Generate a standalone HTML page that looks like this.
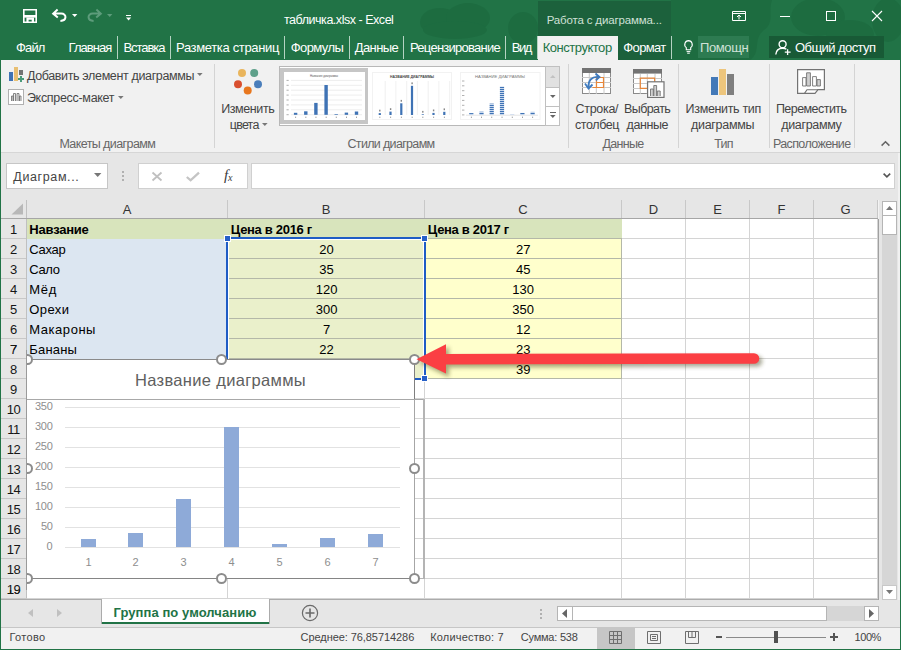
<!DOCTYPE html>
<html lang="ru">
<head>
<meta charset="utf-8">
<title>табличка.xlsx - Excel</title>
<style>
html,body{margin:0;padding:0;}
body{width:901px;height:650px;overflow:hidden;position:relative;background:#f3f3f3;font-family:"Liberation Sans",sans-serif;font-size:12px;color:#444;}
div,span{box-sizing:border-box;}
.a{position:absolute;}
.t{position:absolute;white-space:nowrap;line-height:16px;height:16px;}
.sep{position:absolute;top:36px;width:1px;height:23px;background:#b5d3c2;}
.vsep{position:absolute;top:64px;width:1px;height:84px;background:#d4d4d4;}
.hd{position:absolute;width:11px;height:11px;border-radius:50%;border:2px solid #8c8c8c;background:#fff;}
.bh{position:absolute;width:7px;height:7px;background:#2660c8;border:1px solid #fff;}
svg{position:absolute;overflow:visible;}
</style>
</head>
<body>

<!-- title bar -->
<div class="a" style="left:0px;top:0px;width:901px;height:60px;background:#217346;"></div>
<svg style="left:0;top:0" width="901" height="60" viewBox="0 0 901 60"><g fill="#1c6a3f" opacity="0.75"><ellipse cx="440" cy="22" rx="20" ry="14"/><ellipse cx="468" cy="18" rx="22" ry="15"/><ellipse cx="455" cy="30" rx="32" ry="9"/><ellipse cx="523" cy="28" rx="15" ry="16"/><path d="M671 0H772C768 12 775 22 764 30C752 40 762 52 750 60H671Z"/><ellipse cx="818" cy="17" rx="27" ry="19"/><ellipse cx="850" cy="34" rx="24" ry="14"/><ellipse cx="888" cy="20" rx="16" ry="22"/></g></svg>
<div class="a" style="left:538px;top:1px;width:133px;height:59px;background:#1c613c;"></div>
<div class="a" style="left:538px;top:36px;width:80px;height:24px;background:#f1f1f1;"></div>
<div class="a" style="left:698px;top:36px;width:51px;height:22px;background:#2d7b51;"></div>
<div class="a" style="left:769px;top:36px;width:115px;height:22px;background:#185a36;"></div>
<div class="t" style="left:284.0px;top:12px;font-size:12.5px;color:#fff;letter-spacing:-0.47px;">табличка.xlsx - Excel</div>
<div class="t" style="left:546.7px;top:12px;font-size:11.5px;color:#cfe0d6;letter-spacing:-0.16px;">Работа с диаграмма...</div>
<div class="t" style="left:16.0px;top:40px;font-size:13px;color:#fff;letter-spacing:-0.84px;">Файл</div>
<div class="t" style="left:68.6px;top:40px;font-size:13px;color:#fff;letter-spacing:-0.97px;">Главная</div>
<div class="t" style="left:123.5px;top:40px;font-size:13px;color:#fff;letter-spacing:-1.05px;">Вставка</div>
<div class="t" style="left:176.0px;top:40px;font-size:13px;color:#fff;letter-spacing:-0.35px;">Разметка страниц</div>
<div class="t" style="left:290.7px;top:40px;font-size:13px;color:#fff;letter-spacing:-0.57px;">Формулы</div>
<div class="t" style="left:354.7px;top:40px;font-size:13px;color:#fff;letter-spacing:-0.56px;">Данные</div>
<div class="t" style="left:410.0px;top:40px;font-size:13px;color:#fff;letter-spacing:-0.74px;">Рецензирование</div>
<div class="t" style="left:511.7px;top:40px;font-size:13px;color:#fff;letter-spacing:-1.41px;">Вид</div>
<div class="t" style="left:623.3px;top:40px;font-size:13px;color:#fff;letter-spacing:-0.63px;">Формат</div>
<div class="t" style="left:542.7px;top:40px;font-size:13px;color:#217346;letter-spacing:-0.47px;">Конструктор</div>
<div class="t" style="left:700.0px;top:40px;font-size:13px;color:#cfe2d7;letter-spacing:-0.39px;">Помощн</div>
<div class="t" style="left:795.0px;top:40px;font-size:13px;color:#fff;letter-spacing:-0.57px;">Общий доступ</div>
<div class="sep" style="left:117px"></div>
<div class="sep" style="left:170px"></div>
<div class="sep" style="left:284px"></div>
<div class="sep" style="left:349px"></div>
<div class="sep" style="left:403px"></div>
<div class="sep" style="left:505px"></div>
<div class="sep" style="left:537px"></div>
<div class="sep" style="left:671px"></div>
<svg style="left:23px;top:9px" width="14" height="14" viewBox="0 0 14 14"><path d="M0.8 0.8H13.2V13.2H0.8Z" fill="none" stroke="#fff" stroke-width="1.6"/><path d="M0 6H14V8.6H0Z" fill="#fff"/><path d="M3.4 8.6H11V14H8.7V10.8H5.6V14H3.4Z" fill="#fff"/></svg>
<svg style="left:52px;top:9px" width="15" height="13" viewBox="0 0 15 13"><path d="M5.6 0.6L1.2 4.6L5.8 8.4 M1.6 4.6H9.2C15 4.6 15 11.6 8.4 11.9" fill="none" stroke="#fff" stroke-width="2"/></svg>
<svg style="left:72px;top:14px" width="6" height="3" viewBox="0 0 6 3"><path d="M0 0H5.4L2.7 3Z" fill="#fff"/></svg>
<svg style="left:87px;top:9px" width="15" height="13" viewBox="0 0 15 13"><path d="M9.4 0.6L13.8 4.6L9.2 8.4 M13.4 4.6H5.8C0 4.6 0 11.6 6.6 11.9" fill="none" stroke="#5d9c7b" stroke-width="2"/></svg>
<svg style="left:107px;top:14px" width="6" height="3" viewBox="0 0 6 3"><path d="M0 0H5.4L2.7 3Z" fill="#5d9c7b"/></svg>
<div class="a" style="left:126px;top:15px;width:5px;height:1px;background:#fff;"></div>
<svg style="left:126px;top:17px" width="6" height="4" viewBox="0 0 6 4"><path d="M0 0.4H5.2L2.6 3.6Z" fill="#fff"/></svg>
<svg style="left:732px;top:11px" width="14" height="10" viewBox="0 0 14 10"><path d="M0.5 0.5H13.5V9.5H0.5Z M0.5 2.5H13.5" fill="none" stroke="#fff" stroke-width="1"/><path d="M7 8.5V4.2 M5 6L7 4L9 6" fill="none" stroke="#fff" stroke-width="1"/></svg>
<div class="a" style="left:780px;top:16px;width:10px;height:1px;background:#fff;"></div>
<div class="a" style="left:826px;top:11px;width:10px;height:10px;background:transparent;border:1px solid #fff;"></div>
<svg style="left:872px;top:11px" width="10" height="10" viewBox="0 0 10 10"><path d="M0 0L10 10M10 0L0 10" stroke="#fff" stroke-width="1.1"/></svg>
<svg style="left:684px;top:40px" width="9" height="14" viewBox="0 0 9 14"><path d="M4.5 0.6A3.9 3.9 0 0 0 2.3 7.6V9.8H6.7V7.6A3.9 3.9 0 0 0 4.5 0.6Z" fill="none" stroke="#fff" stroke-width="1.1"/><path d="M2.6 11.6H6.4 M3.2 13.2H5.8" stroke="#fff" stroke-width="1"/></svg>
<svg style="left:775px;top:40px" width="17" height="15" viewBox="0 0 17 15"><circle cx="7.6" cy="4.2" r="3.5" fill="none" stroke="#fff" stroke-width="1.4"/><path d="M0.8 14.5C1.2 9.8 4 8.2 7.6 8.2C9.4 8.2 10.6 8.6 11.4 9.2" fill="none" stroke="#fff" stroke-width="1.4"/><path d="M12.6 9.2V15 M9.8 12.1H15.6" stroke="#fff" stroke-width="1.3"/></svg>
<!-- ribbon -->
<div class="a" style="left:1px;top:60px;width:899px;height:92px;background:#f1f1f1;"></div>
<div class="a" style="left:0px;top:60px;width:1px;height:590px;background:#217346;"></div>
<div class="a" style="left:900px;top:60px;width:1px;height:590px;background:#217346;"></div>
<div class="a" style="left:0px;top:649px;width:901px;height:1px;background:#217346;"></div>
<div class="a" style="left:1px;top:152px;width:899px;height:1px;background:#d6d6d6;"></div>
<div class="t" style="left:26.9px;top:68px;font-size:12.5px;color:#444;letter-spacing:-0.36px;">Добавить элемент диаграммы</div>
<div class="t" style="left:26.9px;top:90px;font-size:12.5px;color:#444;letter-spacing:-0.30px;">Экспресс-макет</div>
<div class="t" style="left:59.4px;top:136px;font-size:12.5px;color:#666;letter-spacing:-0.59px;">Макеты диаграмм</div>
<div class="t" style="left:221.2px;top:101px;font-size:12.5px;color:#444;letter-spacing:-0.40px;">Изменить</div>
<div class="t" style="left:229.8px;top:117px;font-size:12.5px;color:#444;letter-spacing:-0.79px;">цвета</div>
<div class="t" style="left:347.5px;top:136px;font-size:12.5px;color:#666;letter-spacing:-0.67px;">Стили диаграмм</div>
<div class="t" style="left:575.5px;top:101px;font-size:12.5px;color:#444;letter-spacing:-0.30px;">Строка/</div>
<div class="t" style="left:575.0px;top:117px;font-size:12.5px;color:#444;letter-spacing:-0.42px;">столбец</div>
<div class="t" style="left:624.0px;top:101px;font-size:12.5px;color:#444;letter-spacing:-0.58px;">Выбрать</div>
<div class="t" style="left:626.5px;top:117px;font-size:12.5px;color:#444;letter-spacing:-0.41px;">данные</div>
<div class="t" style="left:602.5px;top:136px;font-size:12.5px;color:#666;letter-spacing:-0.69px;">Данные</div>
<div class="t" style="left:685.6px;top:101px;font-size:12.5px;color:#444;letter-spacing:-0.34px;">Изменить тип</div>
<div class="t" style="left:691.0px;top:117px;font-size:12.5px;color:#444;letter-spacing:-0.30px;">диаграммы</div>
<div class="t" style="left:714.2px;top:136px;font-size:12.5px;color:#666;letter-spacing:-0.71px;">Тип</div>
<div class="t" style="left:775.9px;top:101px;font-size:12.5px;color:#444;letter-spacing:-0.54px;">Переместить</div>
<div class="t" style="left:781.3px;top:117px;font-size:12.5px;color:#444;letter-spacing:-0.35px;">диаграмму</div>
<div class="t" style="left:772.9px;top:136px;font-size:12.5px;color:#666;letter-spacing:-0.61px;">Расположение</div>
<div class="vsep" style="left:214px"></div>
<div class="vsep" style="left:568px"></div>
<div class="vsep" style="left:678px"></div>
<div class="vsep" style="left:769px"></div>
<div class="vsep" style="left:854px"></div>
<div class="a" style="left:279px;top:66px;width:267px;height:60px;background:#fff;border:1px solid #b8b8b8;"></div>
<div class="a" style="left:9px;top:72px;width:4px;height:9px;background:#3f73b5;"></div>
<div class="a" style="left:14px;top:67px;width:4px;height:14px;background:#e8bf72;"></div>
<div class="a" style="left:19px;top:70px;width:4px;height:5px;background:#737373;"></div>
<div class="a" style="left:20px;top:76px;width:2px;height:6px;background:#4a9a7a;"></div>
<div class="a" style="left:18px;top:78px;width:6px;height:2px;background:#4a9a7a;"></div>
<svg style="left:197px;top:73px" width="6" height="3" viewBox="0 0 6 3"><path d="M0 0H5.6L2.8 3Z" fill="#777"/></svg>
<div class="a" style="left:8px;top:89px;width:16px;height:16px;background:#fff;border:1px solid #b0b0b0;"></div>
<svg style="left:8px;top:89px" width="16" height="16" viewBox="0 0 16 16"><path d="M3.5 12V7H5V12 M5.5 12V4.5H7.5V12 M9 12V4.5H11V12 M11.5 12V7H13V12" fill="#ececec" stroke="#6a6a6a" stroke-width="0.8"/></svg>
<svg style="left:118px;top:96px" width="6" height="3" viewBox="0 0 6 3"><path d="M0 0H5.6L2.8 3Z" fill="#777"/></svg>
<svg style="left:232px;top:66px" width="32" height="30" viewBox="0 0 32 30"><circle cx="10" cy="7" r="4" fill="#e9b55d"/><circle cx="22.2" cy="7" r="4" fill="#5fa08a"/><circle cx="6" cy="18.2" r="4" fill="#d9502f"/><circle cx="26" cy="18.2" r="4" fill="#4a7ebb"/><circle cx="15.7" cy="24.5" r="4" fill="#e8771e"/></svg>
<svg style="left:262px;top:123px" width="6" height="3" viewBox="0 0 6 3"><path d="M0 0H5.6L2.8 3Z" fill="#777"/></svg>
<svg style="left:582px;top:68px" width="29" height="26" viewBox="0 0 29 26"><rect x="0.5" y="0.5" width="28" height="25" fill="#fff" stroke="#8a8a8a"/><rect x="0" y="0" width="29" height="5" fill="#737373"/><path d="M7.3 5V26 M14.3 5V26 M22 5V26 M0 9.5H29 M0 14.5H29 M0 19.5H29" stroke="#c8c8c8" stroke-width="1" fill="none"/><path d="M10.5 19.5H21.5V9.5H14.5V19.5 M14.5 14.5H21.5" fill="none" stroke="#e8873a" stroke-width="1.2"/><path d="M6.5 19.5C6 12 10 8.5 16.5 9" fill="none" stroke="#3f7bbf" stroke-width="1.8"/><path d="M13.5 5.5L17.5 9L13.8 12.3 M3 15.5L6.5 20.5L10.5 16.5" fill="none" stroke="#3f7bbf" stroke-width="1.8"/></svg>
<svg style="left:633px;top:69px" width="32" height="29" viewBox="0 0 32 29"><rect x="0.5" y="0.5" width="28" height="24" fill="#fff" stroke="#8a8a8a"/><rect x="0" y="0" width="29" height="4.6" fill="#737373"/><path d="M7.3 5V25 M14.3 5V25 M22 5V25 M0 9.5H29 M0 14.5H29 M0 19.5H29" stroke="#c8c8c8" stroke-width="1" fill="none"/><path d="M7.3 9.2H21.6V19.4H7.3Z" fill="none" stroke="#e8873a" stroke-width="1.2"/><rect x="14.6" y="12.8" width="16.4" height="15.6" fill="#fff" stroke="#737373" stroke-width="1.2"/><path d="M17.5 27V20H20.3V27 M20.8 27V16.5H23.6V27 M24.3 27V22H27.2V27" fill="#d0d0d0" stroke="#737373" stroke-width="0.9"/></svg>
<div class="a" style="left:711px;top:77px;width:7px;height:18px;background:#4379b8;"></div>
<div class="a" style="left:719px;top:69px;width:7px;height:26px;background:#edc57c;"></div>
<div class="a" style="left:727px;top:74px;width:7px;height:21px;background:#7f7f7f;"></div>
<svg style="left:797px;top:69px" width="28" height="25" viewBox="0 0 28 25"><path d="M0.6 0.6H27.4V20.7H21L18 24.4H0.6Z" fill="#fff" stroke="#737373" stroke-width="1.2"/><path d="M7.5 24.4L10 20.7H21" fill="none" stroke="#737373" stroke-width="1.1"/><path d="M5.6 17V8.6H9V17Z M15.6 17V7.6H19.4V17Z" fill="#fff" stroke="#737373" stroke-width="0.9"/><path d="M9.6 17V3.8H13.4V17Z M20 17V10.6H23.4V17Z" fill="#d0d0d0" stroke="#737373" stroke-width="0.9"/></svg>
<svg style="left:881px;top:141px" width="9" height="5" viewBox="0 0 9 5"><path d="M0.6 4.6L4.5 0.8L8.4 4.6" fill="none" stroke="#666" stroke-width="1.5"/></svg>
<div class="a" style="left:280px;top:68px;width:88px;height:56px;background:#c6c6c6;"></div>
<div class="a" style="left:284px;top:72px;width:81px;height:48px;background:#fff;"></div>
<svg style="left:0;top:0" width="901" height="130" viewBox="0 0 901 130"><defs><pattern id="stp" width="4" height="2" patternUnits="userSpaceOnUse" y="115"><rect width="4" height="1.3" fill="#3f73b5"/><rect y="1.3" width="4" height="0.7" fill="#c8d8ee"/></pattern></defs><path d="M291 80.4H362" stroke="#e0e0e0" stroke-width="0.6"/><rect x="286.5" y="79.9" width="2.2" height="1" fill="#b0b0b0"/><path d="M291 85.3H362" stroke="#e0e0e0" stroke-width="0.6"/><rect x="286.5" y="84.8" width="2.2" height="1" fill="#b0b0b0"/><path d="M291 90.2H362" stroke="#e0e0e0" stroke-width="0.6"/><rect x="286.5" y="89.7" width="2.2" height="1" fill="#b0b0b0"/><path d="M291 95.1H362" stroke="#e0e0e0" stroke-width="0.6"/><rect x="286.5" y="94.6" width="2.2" height="1" fill="#b0b0b0"/><path d="M291 100.0H362" stroke="#e0e0e0" stroke-width="0.6"/><rect x="286.5" y="99.5" width="2.2" height="1" fill="#b0b0b0"/><path d="M291 104.9H362" stroke="#e0e0e0" stroke-width="0.6"/><rect x="286.5" y="104.4" width="2.2" height="1" fill="#b0b0b0"/><path d="M291 109.8H362" stroke="#e0e0e0" stroke-width="0.6"/><rect x="286.5" y="109.3" width="2.2" height="1" fill="#b0b0b0"/><path d="M291 114.7H362" stroke="#e0e0e0" stroke-width="0.6"/><rect x="286.5" y="114.2" width="2.2" height="1" fill="#b0b0b0"/><rect x="293.9" y="112.8" width="3.4" height="2.0" fill="#3f73b5"/><rect x="295.2" y="116.6" width="0.9" height="1.4" fill="#999"/><rect x="304.1" y="111.3" width="3.4" height="3.5" fill="#3f73b5"/><rect x="305.4" y="116.6" width="0.9" height="1.4" fill="#999"/><rect x="314.2" y="102.9" width="3.4" height="11.9" fill="#3f73b5"/><rect x="315.5" y="116.6" width="0.9" height="1.4" fill="#999"/><rect x="324.4" y="85.0" width="3.4" height="29.8" fill="#3f73b5"/><rect x="325.7" y="116.6" width="0.9" height="1.4" fill="#999"/><rect x="334.5" y="114.1" width="3.4" height="0.7" fill="#3f73b5"/><rect x="335.8" y="116.6" width="0.9" height="1.4" fill="#999"/><rect x="344.7" y="112.6" width="3.4" height="2.2" fill="#3f73b5"/><rect x="346.0" y="116.6" width="0.9" height="1.4" fill="#999"/><rect x="354.8" y="111.5" width="3.4" height="3.3" fill="#3f73b5"/><rect x="356.1" y="116.6" width="0.9" height="1.4" fill="#999"/><text x="310" y="77.4" font-size="3.2" fill="#555" textLength="28" lengthAdjust="spacingAndGlyphs">Название диаграммы</text><rect x="372.5" y="72.5" width="79" height="47" fill="#fff" stroke="#f2f2f2"/><text x="390" y="77.6" font-size="4.2" font-weight="bold" fill="#444" textLength="44" lengthAdjust="spacingAndGlyphs">НАЗВАНИЕ ДИАГРАММЫ</text><path d="M385.2 81V115" stroke="#e6e6e6" stroke-width="0.6"/><rect x="378.7" y="113.1" width="2.2" height="1.9" fill="#3f73b5"/><rect x="379.1" y="109.7" width="1.4" height="1.8" fill="#888"/><rect x="379.4" y="116.6" width="0.9" height="1.4" fill="#999"/><path d="M395.9 81V115" stroke="#e6e6e6" stroke-width="0.6"/><rect x="389.4" y="111.6" width="2.2" height="3.4" fill="#3f73b5"/><rect x="389.9" y="108.2" width="1.4" height="1.8" fill="#888"/><rect x="390.2" y="116.6" width="0.9" height="1.4" fill="#999"/><path d="M406.7 81V115" stroke="#e6e6e6" stroke-width="0.6"/><rect x="400.2" y="103.3" width="2.2" height="11.7" fill="#3f73b5"/><rect x="400.6" y="99.9" width="1.4" height="1.8" fill="#888"/><rect x="400.9" y="116.6" width="0.9" height="1.4" fill="#999"/><path d="M417.4 81V115" stroke="#e6e6e6" stroke-width="0.6"/><rect x="410.9" y="85.8" width="2.2" height="29.2" fill="#3f73b5"/><rect x="411.4" y="82.4" width="1.4" height="1.8" fill="#888"/><rect x="411.7" y="116.6" width="0.9" height="1.4" fill="#999"/><path d="M428.2 81V115" stroke="#e6e6e6" stroke-width="0.6"/><rect x="421.7" y="114.3" width="2.2" height="0.7" fill="#3f73b5"/><rect x="422.1" y="110.9" width="1.4" height="1.8" fill="#888"/><rect x="422.4" y="116.6" width="0.9" height="1.4" fill="#999"/><path d="M438.9 81V115" stroke="#e6e6e6" stroke-width="0.6"/><rect x="432.4" y="112.9" width="2.2" height="2.1" fill="#3f73b5"/><rect x="432.9" y="109.5" width="1.4" height="1.8" fill="#888"/><rect x="433.2" y="116.6" width="0.9" height="1.4" fill="#999"/><path d="M449.7 81V115" stroke="#e6e6e6" stroke-width="0.6"/><rect x="443.2" y="111.8" width="2.2" height="3.2" fill="#3f73b5"/><rect x="443.6" y="108.4" width="1.4" height="1.8" fill="#888"/><rect x="443.9" y="116.6" width="0.9" height="1.4" fill="#999"/><rect x="460.5" y="72.5" width="79.5" height="47" fill="#fff" stroke="#f2f2f2"/><text x="475" y="78" font-size="4.2" fill="#777" textLength="50" lengthAdjust="spacingAndGlyphs">НАЗВАНИЕ ДИАГРАММЫ</text><rect x="462" y="80.5" width="2.4" height="1" fill="#b0b0b0"/><rect x="462" y="85.3" width="2.4" height="1" fill="#b0b0b0"/><rect x="462" y="90.2" width="2.4" height="1" fill="#b0b0b0"/><rect x="462" y="95.0" width="2.4" height="1" fill="#b0b0b0"/><rect x="462" y="99.9" width="2.4" height="1" fill="#b0b0b0"/><rect x="462" y="104.8" width="2.4" height="1" fill="#b0b0b0"/><rect x="462" y="109.6" width="2.4" height="1" fill="#b0b0b0"/><rect x="462" y="114.4" width="2.4" height="1" fill="#b0b0b0"/><path d="M466 115.2H538" stroke="#d8d8d8" stroke-width="0.7"/><rect x="469.2" y="113.1" width="4.2" height="1.9" fill="url(#stp)"/><rect x="470.9" y="116.6" width="0.9" height="1.4" fill="#999"/><rect x="479.4" y="111.7" width="4.2" height="3.3" fill="url(#stp)"/><rect x="481.1" y="116.6" width="0.9" height="1.4" fill="#999"/><rect x="489.6" y="103.6" width="4.2" height="11.4" fill="url(#stp)"/><rect x="491.3" y="116.6" width="0.9" height="1.4" fill="#999"/><rect x="499.9" y="86.5" width="4.2" height="28.5" fill="url(#stp)"/><rect x="501.6" y="116.6" width="0.9" height="1.4" fill="#999"/><rect x="510.1" y="114.3" width="4.2" height="0.7" fill="url(#stp)"/><rect x="511.8" y="116.6" width="0.9" height="1.4" fill="#999"/><rect x="520.3" y="112.9" width="4.2" height="2.1" fill="url(#stp)"/><rect x="522.0" y="116.6" width="0.9" height="1.4" fill="#999"/><rect x="530.5" y="111.9" width="4.2" height="3.1" fill="url(#stp)"/><rect x="532.2" y="116.6" width="0.9" height="1.4" fill="#999"/></svg>
<div class="a" style="left:545px;top:66px;width:15px;height:60px;background:#fff;border:1px solid #c0c0c0;"></div>
<div class="a" style="left:545px;top:66px;width:15px;height:22px;background:#e1e1e1;border:1px solid #c0c0c0;"></div>
<div class="a" style="left:545px;top:106px;width:15px;height:1px;background:#c0c0c0;"></div>
<svg style="left:550px;top:75px" width="6" height="3" viewBox="0 0 6 3"><path d="M0 3H5.6L2.8 0Z" fill="#c2c2c2"/></svg>
<svg style="left:550px;top:95px" width="6" height="3" viewBox="0 0 6 3"><path d="M0 0H5.6L2.8 3Z" fill="#666"/></svg>
<div class="a" style="left:550px;top:112px;width:6px;height:1px;background:#666;"></div>
<svg style="left:550px;top:115px" width="6" height="3" viewBox="0 0 6 3"><path d="M0 0H5.6L2.8 3Z" fill="#666"/></svg>
<!-- formula bar -->
<div class="a" style="left:1px;top:153px;width:899px;height:47px;background:#e6e6e6;"></div>
<div class="a" style="left:6px;top:163px;width:102px;height:26px;background:#fff;border:1px solid #c6c6c6;"></div>
<div class="t" style="left:13.3px;top:169px;font-size:12.5px;color:#444;letter-spacing:0.62px;">Диаграм...</div>
<div class="a" style="left:138px;top:163px;width:110px;height:26px;background:#fff;border:1px solid #d0d0d0;"></div>
<div class="a" style="left:251px;top:163px;width:644px;height:26px;background:#fff;border:1px solid #d0d0d0;"></div>
<!-- grid -->
<div class="a" style="left:1px;top:200px;width:877px;height:19px;background:#e6e6e6;"></div>
<div class="a" style="left:1px;top:219px;width:26px;height:380px;background:#e6e6e6;"></div>
<div class="a" style="left:27px;top:219px;width:851px;height:380px;background:#fff;"></div>
<div class="a" style="left:27px;top:238px;width:851px;height:1px;background:#d4d4d4;"></div>
<div class="a" style="left:1px;top:238px;width:26px;height:1px;background:#c8c8c8;"></div>
<div class="a" style="left:27px;top:258px;width:851px;height:1px;background:#d4d4d4;"></div>
<div class="a" style="left:1px;top:258px;width:26px;height:1px;background:#c8c8c8;"></div>
<div class="a" style="left:27px;top:278px;width:851px;height:1px;background:#d4d4d4;"></div>
<div class="a" style="left:1px;top:278px;width:26px;height:1px;background:#c8c8c8;"></div>
<div class="a" style="left:27px;top:298px;width:851px;height:1px;background:#d4d4d4;"></div>
<div class="a" style="left:1px;top:298px;width:26px;height:1px;background:#c8c8c8;"></div>
<div class="a" style="left:27px;top:318px;width:851px;height:1px;background:#d4d4d4;"></div>
<div class="a" style="left:1px;top:318px;width:26px;height:1px;background:#c8c8c8;"></div>
<div class="a" style="left:27px;top:338px;width:851px;height:1px;background:#d4d4d4;"></div>
<div class="a" style="left:1px;top:338px;width:26px;height:1px;background:#c8c8c8;"></div>
<div class="a" style="left:27px;top:358px;width:851px;height:1px;background:#d4d4d4;"></div>
<div class="a" style="left:1px;top:358px;width:26px;height:1px;background:#c8c8c8;"></div>
<div class="a" style="left:27px;top:378px;width:851px;height:1px;background:#d4d4d4;"></div>
<div class="a" style="left:1px;top:378px;width:26px;height:1px;background:#c8c8c8;"></div>
<div class="a" style="left:27px;top:398px;width:851px;height:1px;background:#d4d4d4;"></div>
<div class="a" style="left:1px;top:398px;width:26px;height:1px;background:#c8c8c8;"></div>
<div class="a" style="left:27px;top:418px;width:851px;height:1px;background:#d4d4d4;"></div>
<div class="a" style="left:1px;top:418px;width:26px;height:1px;background:#c8c8c8;"></div>
<div class="a" style="left:27px;top:438px;width:851px;height:1px;background:#d4d4d4;"></div>
<div class="a" style="left:1px;top:438px;width:26px;height:1px;background:#c8c8c8;"></div>
<div class="a" style="left:27px;top:458px;width:851px;height:1px;background:#d4d4d4;"></div>
<div class="a" style="left:1px;top:458px;width:26px;height:1px;background:#c8c8c8;"></div>
<div class="a" style="left:27px;top:478px;width:851px;height:1px;background:#d4d4d4;"></div>
<div class="a" style="left:1px;top:478px;width:26px;height:1px;background:#c8c8c8;"></div>
<div class="a" style="left:27px;top:498px;width:851px;height:1px;background:#d4d4d4;"></div>
<div class="a" style="left:1px;top:498px;width:26px;height:1px;background:#c8c8c8;"></div>
<div class="a" style="left:27px;top:518px;width:851px;height:1px;background:#d4d4d4;"></div>
<div class="a" style="left:1px;top:518px;width:26px;height:1px;background:#c8c8c8;"></div>
<div class="a" style="left:27px;top:538px;width:851px;height:1px;background:#d4d4d4;"></div>
<div class="a" style="left:1px;top:538px;width:26px;height:1px;background:#c8c8c8;"></div>
<div class="a" style="left:27px;top:558px;width:851px;height:1px;background:#d4d4d4;"></div>
<div class="a" style="left:1px;top:558px;width:26px;height:1px;background:#c8c8c8;"></div>
<div class="a" style="left:27px;top:578px;width:851px;height:1px;background:#d4d4d4;"></div>
<div class="a" style="left:1px;top:578px;width:26px;height:1px;background:#c8c8c8;"></div>
<div class="a" style="left:27px;top:598px;width:851px;height:1px;background:#d4d4d4;"></div>
<div class="a" style="left:1px;top:598px;width:26px;height:1px;background:#c8c8c8;"></div>
<div class="a" style="left:227px;top:219px;width:1px;height:380px;background:#d4d4d4;"></div>
<div class="a" style="left:227px;top:200px;width:1px;height:19px;background:#c8c8c8;"></div>
<div class="a" style="left:424px;top:219px;width:1px;height:380px;background:#d4d4d4;"></div>
<div class="a" style="left:424px;top:200px;width:1px;height:19px;background:#c8c8c8;"></div>
<div class="a" style="left:621px;top:219px;width:1px;height:380px;background:#d4d4d4;"></div>
<div class="a" style="left:621px;top:200px;width:1px;height:19px;background:#c8c8c8;"></div>
<div class="a" style="left:685px;top:219px;width:1px;height:380px;background:#d4d4d4;"></div>
<div class="a" style="left:685px;top:200px;width:1px;height:19px;background:#c8c8c8;"></div>
<div class="a" style="left:749px;top:219px;width:1px;height:380px;background:#d4d4d4;"></div>
<div class="a" style="left:749px;top:200px;width:1px;height:19px;background:#c8c8c8;"></div>
<div class="a" style="left:813px;top:219px;width:1px;height:380px;background:#d4d4d4;"></div>
<div class="a" style="left:813px;top:200px;width:1px;height:19px;background:#c8c8c8;"></div>
<div class="a" style="left:877px;top:219px;width:1px;height:380px;background:#d4d4d4;"></div>
<div class="a" style="left:877px;top:200px;width:1px;height:19px;background:#c8c8c8;"></div>
<div class="a" style="left:27px;top:219px;width:595px;height:20px;background:#d8e4bc;"></div>
<div class="a" style="left:27px;top:239px;width:200px;height:120px;background:#dce6f1;"></div>
<div class="a" style="left:228px;top:239px;width:196px;height:139px;background:#eaf0cb;"></div>
<div class="a" style="left:425px;top:239px;width:196px;height:139px;background:#ffffcc;"></div>
<div class="a" style="left:228px;top:258px;width:393px;height:1px;background:#b4b8a8;"></div>
<div class="a" style="left:228px;top:278px;width:393px;height:1px;background:#b4b8a8;"></div>
<div class="a" style="left:228px;top:298px;width:393px;height:1px;background:#b4b8a8;"></div>
<div class="a" style="left:228px;top:318px;width:393px;height:1px;background:#b4b8a8;"></div>
<div class="a" style="left:228px;top:338px;width:393px;height:1px;background:#b4b8a8;"></div>
<div class="a" style="left:228px;top:358px;width:393px;height:1px;background:#b4b8a8;"></div>
<div class="a" style="left:424px;top:239px;width:1px;height:140px;background:#b4b8a8;"></div>
<div class="a" style="left:428px;top:238px;width:194px;height:1px;background:#b4b8a8;"></div>
<div class="a" style="left:621px;top:239px;width:1px;height:140px;background:#b4b8a8;"></div>
<div class="a" style="left:428px;top:378px;width:194px;height:1px;background:#b4b8a8;"></div>
<div class="a" style="left:26px;top:200px;width:1px;height:399px;background:#c0c0c0;"></div>
<div class="a" style="left:1px;top:218px;width:877px;height:1px;background:#a6a6a6;"></div>
<div class="a" style="left:1px;top:599px;width:899px;height:1px;background:#ababab;"></div>
<div class="a" style="left:878px;top:219px;width:1px;height:381px;background:#a0a0a0;"></div>
<div class="t" style="left:122.7px;top:202px;font-size:13px;color:#333;">A</div>
<div class="t" style="left:321.7px;top:202px;font-size:13px;color:#333;">B</div>
<div class="t" style="left:518.3px;top:202px;font-size:13px;color:#333;">C</div>
<div class="t" style="left:648.8px;top:202px;font-size:13px;color:#333;">D</div>
<div class="t" style="left:713.2px;top:202px;font-size:13px;color:#333;">E</div>
<div class="t" style="left:777.5px;top:202px;font-size:13px;color:#333;">F</div>
<div class="t" style="left:840.4px;top:202px;font-size:13px;color:#333;">G</div>
<div class="t" style="left:10.1px;top:222px;font-size:13px;color:#161616;letter-spacing:-0.40px;">1</div>
<div class="t" style="left:10.1px;top:242px;font-size:13px;color:#161616;letter-spacing:-0.40px;">2</div>
<div class="t" style="left:10.1px;top:262px;font-size:13px;color:#161616;letter-spacing:-0.40px;">3</div>
<div class="t" style="left:10.1px;top:282px;font-size:13px;color:#161616;letter-spacing:-0.40px;">4</div>
<div class="t" style="left:10.1px;top:302px;font-size:13px;color:#161616;letter-spacing:-0.40px;">5</div>
<div class="t" style="left:10.1px;top:322px;font-size:13px;color:#161616;letter-spacing:-0.40px;">6</div>
<div class="t" style="left:10.1px;top:342px;font-size:13px;color:#161616;letter-spacing:-0.40px;">7</div>
<div class="t" style="left:10.1px;top:362px;font-size:13px;color:#161616;letter-spacing:-0.40px;">8</div>
<div class="t" style="left:10.1px;top:382px;font-size:13px;color:#161616;letter-spacing:-0.40px;">9</div>
<div class="t" style="left:6.7px;top:402px;font-size:13px;color:#161616;letter-spacing:-0.40px;">10</div>
<div class="t" style="left:7.2px;top:422px;font-size:13px;color:#161616;letter-spacing:-0.40px;">11</div>
<div class="t" style="left:6.7px;top:442px;font-size:13px;color:#161616;letter-spacing:-0.40px;">12</div>
<div class="t" style="left:6.7px;top:462px;font-size:13px;color:#161616;letter-spacing:-0.40px;">13</div>
<div class="t" style="left:6.7px;top:482px;font-size:13px;color:#161616;letter-spacing:-0.40px;">14</div>
<div class="t" style="left:6.7px;top:502px;font-size:13px;color:#161616;letter-spacing:-0.40px;">15</div>
<div class="t" style="left:6.7px;top:522px;font-size:13px;color:#161616;letter-spacing:-0.40px;">16</div>
<div class="t" style="left:6.7px;top:542px;font-size:13px;color:#161616;letter-spacing:-0.40px;">17</div>
<div class="t" style="left:6.7px;top:562px;font-size:13px;color:#161616;letter-spacing:-0.40px;">18</div>
<div class="t" style="left:6.7px;top:582px;font-size:13px;color:#161616;letter-spacing:-0.40px;">19</div>
<div class="t" style="left:29.3px;top:222px;font-size:13px;color:#000;letter-spacing:-0.26px;font-weight:bold;">Навзание</div>
<div class="t" style="left:230.8px;top:222px;font-size:13px;color:#000;letter-spacing:-0.31px;font-weight:bold;">Цена в 2016 г</div>
<div class="t" style="left:427.8px;top:222px;font-size:13px;color:#000;letter-spacing:-0.31px;font-weight:bold;">Цена в 2017 г</div>
<div class="t" style="left:29.3px;top:242px;font-size:13px;color:#000;letter-spacing:-0.28px;">Сахар</div>
<div class="t" style="left:319.3px;top:242px;font-size:13px;color:#000;letter-spacing:0.05px;">20</div>
<div class="t" style="left:515.9px;top:242px;font-size:13px;color:#000;letter-spacing:0.05px;">27</div>
<div class="t" style="left:29.3px;top:262px;font-size:13px;color:#000;letter-spacing:-0.38px;">Сало</div>
<div class="t" style="left:319.3px;top:262px;font-size:13px;color:#000;letter-spacing:0.05px;">35</div>
<div class="t" style="left:515.9px;top:262px;font-size:13px;color:#000;letter-spacing:0.05px;">45</div>
<div class="t" style="left:29.3px;top:282px;font-size:13px;color:#000;letter-spacing:0.68px;">Мёд</div>
<div class="t" style="left:315.7px;top:282px;font-size:13px;color:#000;letter-spacing:0.05px;">120</div>
<div class="t" style="left:512.3px;top:282px;font-size:13px;color:#000;letter-spacing:0.05px;">130</div>
<div class="t" style="left:29.3px;top:302px;font-size:13px;color:#000;letter-spacing:0.43px;">Орехи</div>
<div class="t" style="left:315.7px;top:302px;font-size:13px;color:#000;letter-spacing:0.05px;">300</div>
<div class="t" style="left:512.3px;top:302px;font-size:13px;color:#000;letter-spacing:0.05px;">350</div>
<div class="t" style="left:29.3px;top:322px;font-size:13px;color:#000;letter-spacing:0.54px;">Макароны</div>
<div class="t" style="left:323.0px;top:322px;font-size:13px;color:#000;letter-spacing:0.05px;">7</div>
<div class="t" style="left:515.9px;top:322px;font-size:13px;color:#000;letter-spacing:0.05px;">12</div>
<div class="t" style="left:29.3px;top:342px;font-size:13px;color:#000;letter-spacing:0.17px;">Бананы</div>
<div class="t" style="left:319.3px;top:342px;font-size:13px;color:#000;letter-spacing:0.05px;">22</div>
<div class="t" style="left:515.9px;top:342px;font-size:13px;color:#000;letter-spacing:0.05px;">23</div>
<div class="t" style="left:515.9px;top:362px;font-size:13px;color:#000;letter-spacing:0.05px;">39</div>
<div class="a" style="left:226px;top:239px;width:199px;height:1px;background:#fff;"></div>
<div class="a" style="left:228px;top:239px;width:1px;height:120px;background:#fff;"></div>
<div class="a" style="left:423px;top:239px;width:1px;height:139px;background:#fff;"></div>
<div class="a" style="left:226px;top:237px;width:199px;height:2px;background:#1f5cc5;"></div>
<div class="a" style="left:226px;top:237px;width:2px;height:123px;background:#1f5cc5;"></div>
<div class="a" style="left:424px;top:237px;width:2px;height:143px;background:#1f5cc5;"></div>
<div class="a" style="left:415px;top:378px;width:11px;height:2px;background:#1f5cc5;"></div>
<div class="bh" style="left:224px;top:235px"></div>
<div class="bh" style="left:421px;top:235px"></div>
<div class="bh" style="left:421px;top:375px"></div>
<svg style="left:94px;top:173px" width="8" height="4" viewBox="0 0 8 4"><path d="M0 0H7.4L3.7 4Z" fill="#777"/></svg>
<div class="a" style="left:122px;top:171px;width:2px;height:2px;background:#b0b0b0;"></div>
<div class="a" style="left:122px;top:175px;width:2px;height:2px;background:#b0b0b0;"></div>
<div class="a" style="left:122px;top:179px;width:2px;height:2px;background:#b0b0b0;"></div>
<svg style="left:152px;top:172px" width="10" height="9" viewBox="0 0 10 9"><path d="M0.5 0.5L9.5 8.5M9.5 0.5L0.5 8.5" stroke="#c0c0c0" stroke-width="1.8"/></svg>
<svg style="left:186px;top:172px" width="14" height="9" viewBox="0 0 14 9"><path d="M0.8 5L4.6 8.3L13 0.6" fill="none" stroke="#c4c4c4" stroke-width="2.3"/></svg>
<div class="t" style="left:224px;top:167px;font-family:'Liberation Serif',serif;font-style:italic;font-size:15px;color:#3a3a3a;letter-spacing:-0.3px;">f<span style="font-size:10px;position:relative;top:1px;">x</span></div>
<svg style="left:883px;top:173px" width="8" height="5" viewBox="0 0 8 5"><path d="M0.6 0.6L3.9 3.9L7.2 0.6" fill="none" stroke="#555" stroke-width="1.6"/></svg>
<svg style="left:11px;top:203px" width="13" height="12" viewBox="0 0 13 12"><path d="M12 0.5V11.5H0.5Z" fill="#b8b8b8"/></svg>
<!-- chart (being resized) -->
<div class="a" style="left:27px;top:359px;width:388px;height:220px;background:#fff;"></div>
<div class="a" style="left:27px;top:359px;width:388px;height:1px;background:#8a8a8a;"></div>
<div class="a" style="left:414px;top:359px;width:1px;height:40px;background:#7f7f7f;"></div>
<div class="a" style="left:414px;top:399px;width:1px;height:180px;background:#a6a6a6;"></div>
<div class="a" style="left:27px;top:578px;width:388px;height:1px;background:#858585;"></div>
<div class="a" style="left:27px;top:399px;width:397px;height:1px;background:#a8a8a8;"></div>
<div class="a" style="left:423px;top:399px;width:2px;height:180px;background:#b4b4b4;"></div>
<div class="a" style="left:415px;top:578px;width:10px;height:1px;background:#b4b4b4;"></div>
<div class="t" style="left:135.0px;top:372px;font-size:16.5px;color:#606060;letter-spacing:0.32px;">Название диаграммы</div>
<div class="a" style="left:65px;top:407px;width:335px;height:1px;background:#e2e2e2;"></div>
<div class="t" style="left:35.1px;top:398px;font-size:11px;color:#8e8e8e;letter-spacing:-0.35px;">350</div>
<div class="a" style="left:65px;top:427px;width:335px;height:1px;background:#e2e2e2;"></div>
<div class="t" style="left:35.1px;top:418px;font-size:11px;color:#8e8e8e;letter-spacing:-0.35px;">300</div>
<div class="a" style="left:65px;top:447px;width:335px;height:1px;background:#e2e2e2;"></div>
<div class="t" style="left:35.1px;top:438px;font-size:11px;color:#8e8e8e;letter-spacing:-0.35px;">250</div>
<div class="a" style="left:65px;top:467px;width:335px;height:1px;background:#e2e2e2;"></div>
<div class="t" style="left:35.1px;top:458px;font-size:11px;color:#8e8e8e;letter-spacing:-0.35px;">200</div>
<div class="a" style="left:65px;top:487px;width:335px;height:1px;background:#e2e2e2;"></div>
<div class="t" style="left:35.1px;top:478px;font-size:11px;color:#8e8e8e;letter-spacing:-0.35px;">150</div>
<div class="a" style="left:65px;top:507px;width:335px;height:1px;background:#e2e2e2;"></div>
<div class="t" style="left:35.1px;top:498px;font-size:11px;color:#8e8e8e;letter-spacing:-0.35px;">100</div>
<div class="a" style="left:65px;top:527px;width:335px;height:1px;background:#e2e2e2;"></div>
<div class="t" style="left:40.9px;top:518px;font-size:11px;color:#8e8e8e;letter-spacing:-0.35px;">50</div>
<div class="a" style="left:65px;top:547px;width:335px;height:1px;background:#e2e2e2;"></div>
<div class="t" style="left:46.6px;top:538px;font-size:11px;color:#8e8e8e;letter-spacing:-0.35px;">0</div>
<div class="a" style="left:81px;top:539px;width:15px;height:8px;background:#8eaad8;"></div>
<div class="t" style="left:85.4px;top:554px;font-size:11px;color:#8e8e8e;">1</div>
<div class="a" style="left:128px;top:533px;width:15px;height:14px;background:#8eaad8;"></div>
<div class="t" style="left:132.4px;top:554px;font-size:11px;color:#8e8e8e;">2</div>
<div class="a" style="left:176px;top:499px;width:15px;height:48px;background:#8eaad8;"></div>
<div class="t" style="left:180.4px;top:554px;font-size:11px;color:#8e8e8e;">3</div>
<div class="a" style="left:224px;top:427px;width:15px;height:120px;background:#8eaad8;"></div>
<div class="t" style="left:228.4px;top:554px;font-size:11px;color:#8e8e8e;">4</div>
<div class="a" style="left:272px;top:544px;width:15px;height:3px;background:#8eaad8;"></div>
<div class="t" style="left:276.4px;top:554px;font-size:11px;color:#8e8e8e;">5</div>
<div class="a" style="left:320px;top:538px;width:15px;height:9px;background:#8eaad8;"></div>
<div class="t" style="left:324.4px;top:554px;font-size:11px;color:#8e8e8e;">6</div>
<div class="a" style="left:368px;top:534px;width:15px;height:13px;background:#8eaad8;"></div>
<div class="t" style="left:372.4px;top:554px;font-size:11px;color:#8e8e8e;">7</div>
<div class="hd" style="left:22px;top:354px"></div>
<div class="hd" style="left:216px;top:354px"></div>
<div class="hd" style="left:409px;top:354px"></div>
<div class="hd" style="left:22px;top:463px"></div>
<div class="hd" style="left:409px;top:463px"></div>
<div class="hd" style="left:22px;top:573px"></div>
<div class="hd" style="left:216px;top:573px"></div>
<div class="hd" style="left:409px;top:573px"></div>
<div class="a" style="left:1px;top:350px;width:26px;height:240px;background:#e6e6e6;"></div>
<div class="a" style="left:1px;top:358px;width:26px;height:1px;background:#c8c8c8;"></div>
<div class="t" style="left:10.1px;top:342px;font-size:13px;color:#161616;letter-spacing:-0.40px;">7</div>
<div class="a" style="left:1px;top:378px;width:26px;height:1px;background:#c8c8c8;"></div>
<div class="t" style="left:10.1px;top:362px;font-size:13px;color:#161616;letter-spacing:-0.40px;">8</div>
<div class="a" style="left:1px;top:398px;width:26px;height:1px;background:#c8c8c8;"></div>
<div class="t" style="left:10.1px;top:382px;font-size:13px;color:#161616;letter-spacing:-0.40px;">9</div>
<div class="a" style="left:1px;top:418px;width:26px;height:1px;background:#c8c8c8;"></div>
<div class="t" style="left:6.7px;top:402px;font-size:13px;color:#161616;letter-spacing:-0.40px;">10</div>
<div class="a" style="left:1px;top:438px;width:26px;height:1px;background:#c8c8c8;"></div>
<div class="t" style="left:7.2px;top:422px;font-size:13px;color:#161616;letter-spacing:-0.40px;">11</div>
<div class="a" style="left:1px;top:458px;width:26px;height:1px;background:#c8c8c8;"></div>
<div class="t" style="left:6.7px;top:442px;font-size:13px;color:#161616;letter-spacing:-0.40px;">12</div>
<div class="a" style="left:1px;top:478px;width:26px;height:1px;background:#c8c8c8;"></div>
<div class="t" style="left:6.7px;top:462px;font-size:13px;color:#161616;letter-spacing:-0.40px;">13</div>
<div class="a" style="left:1px;top:498px;width:26px;height:1px;background:#c8c8c8;"></div>
<div class="t" style="left:6.7px;top:482px;font-size:13px;color:#161616;letter-spacing:-0.40px;">14</div>
<div class="a" style="left:1px;top:518px;width:26px;height:1px;background:#c8c8c8;"></div>
<div class="t" style="left:6.7px;top:502px;font-size:13px;color:#161616;letter-spacing:-0.40px;">15</div>
<div class="a" style="left:1px;top:538px;width:26px;height:1px;background:#c8c8c8;"></div>
<div class="t" style="left:6.7px;top:522px;font-size:13px;color:#161616;letter-spacing:-0.40px;">16</div>
<div class="a" style="left:1px;top:558px;width:26px;height:1px;background:#c8c8c8;"></div>
<div class="t" style="left:6.7px;top:542px;font-size:13px;color:#161616;letter-spacing:-0.40px;">17</div>
<div class="a" style="left:1px;top:578px;width:26px;height:1px;background:#c8c8c8;"></div>
<div class="t" style="left:6.7px;top:562px;font-size:13px;color:#161616;letter-spacing:-0.40px;">18</div>
<div class="a" style="left:1px;top:598px;width:26px;height:1px;background:#c8c8c8;"></div>
<div class="t" style="left:6.7px;top:582px;font-size:13px;color:#161616;letter-spacing:-0.40px;">19</div>
<div class="a" style="left:26px;top:350px;width:1px;height:240px;background:#9a9a9a;"></div>
<svg style="left:400px;top:335px" width="380" height="50" viewBox="400 335 380 50"><defs><filter id="sh" x="-5%" y="-30%" width="110%" height="180%"><feGaussianBlur stdDeviation="2.2"/></filter></defs><path d="M419 362.5 L449 347 L449 357 L757 356 A5.2 5.2 0 0 1 757 366.5 L449 367.5 L449 377 Z" fill="#3a3a10" opacity="0.45" filter="url(#sh)"/><path d="M416.5 359.3 L446 344.3 L446 353.9 L754 353.2 A5.3 5.3 0 0 1 754 363.8 L446 364.4 L446 373.6 Z" fill="#fb3f43"/></svg>
<!-- scrollbars, sheet tabs, status bar -->
<div class="a" style="left:879px;top:200px;width:21px;height:400px;background:#e6e6e6;"></div>
<div class="a" style="left:898px;top:153px;width:2px;height:474px;background:#f1f1f1;"></div>
<div class="a" style="left:882px;top:216px;width:15px;height:370px;background:#d6d6d6;"></div>
<div class="a" style="left:882px;top:201px;width:15px;height:15px;background:#fff;border:1px solid #b5b5b5;"></div>
<div class="a" style="left:882px;top:215px;width:15px;height:20px;background:#fff;border:1px solid #b5b5b5;"></div>
<div class="a" style="left:882px;top:585px;width:15px;height:15px;background:#fff;border:1px solid #c8c8c8;"></div>
<svg style="left:886px;top:206px" width="7" height="4" viewBox="0 0 7 4"><path d="M0 4 L3.5 0 L7 4Z" fill="#777"/></svg>
<svg style="left:886px;top:590px" width="7" height="4" viewBox="0 0 7 4"><path d="M0 0 L3.5 4 L7 0Z" fill="#777"/></svg>
<div class="a" style="left:1px;top:600px;width:899px;height:27px;background:#e6e6e6;"></div>
<div class="a" style="left:1px;top:627px;width:899px;height:1px;background:#c6c6c6;"></div>
<div class="a" style="left:1px;top:628px;width:899px;height:21px;background:#f1f1f1;"></div>
<div class="a" style="left:101px;top:599px;width:169px;height:25px;background:#fff;border-left:1px solid #ababab;border-right:1px solid #ababab;"></div>
<div class="a" style="left:102px;top:622px;width:167px;height:2px;background:#217346;"></div>
<div class="t" style="left:113.5px;top:605px;font-size:13px;color:#217346;letter-spacing:0.07px;font-weight:bold;">Группа по умолчанию</div>
<svg style="left:28px;top:609px" width="5" height="8" viewBox="0 0 5 8"><path d="M5 0 L0 4 L5 8Z" fill="#c0c0c0"/></svg>
<svg style="left:57px;top:609px" width="5" height="8" viewBox="0 0 5 8"><path d="M0 0 L5 4 L0 8Z" fill="#c0c0c0"/></svg>
<svg style="left:301px;top:604px" width="18" height="18" viewBox="0 0 18 18"><circle cx="9" cy="9" r="7.6" fill="none" stroke="#6a6a6a" stroke-width="1.2"/><path d="M9 4.5V13.5M4.5 9H13.5" stroke="#6a6a6a" stroke-width="1.6"/></svg>
<div class="a" style="left:540px;top:609px;width:2px;height:2px;background:#b0b0b0;"></div>
<div class="a" style="left:540px;top:613px;width:2px;height:2px;background:#b0b0b0;"></div>
<div class="a" style="left:540px;top:617px;width:2px;height:2px;background:#b0b0b0;"></div>
<div class="a" style="left:557px;top:606px;width:322px;height:15px;background:#d6d6d6;"></div>
<div class="a" style="left:557px;top:606px;width:16px;height:15px;background:#fff;border:1px solid #b5b5b5;"></div>
<div class="a" style="left:572px;top:606px;width:255px;height:15px;background:#fff;border:1px solid #b5b5b5;"></div>
<div class="a" style="left:864px;top:606px;width:15px;height:15px;background:#fff;border:1px solid #b5b5b5;"></div>
<svg style="left:562px;top:609px" width="5" height="9" viewBox="0 0 5 9"><path d="M5 0 L0 4.5 L5 9Z" fill="#666"/></svg>
<svg style="left:869px;top:609px" width="5" height="9" viewBox="0 0 5 9"><path d="M0 0 L5 4.5 L0 9Z" fill="#666"/></svg>
<div class="a" style="left:597px;top:628px;width:38px;height:21px;background:#c6c6c6;"></div>
<div class="t" style="left:9.6px;top:629px;font-size:11px;color:#444;letter-spacing:0.29px;">Готово</div>
<div class="t" style="left:300.6px;top:629px;font-size:11px;color:#444;letter-spacing:-0.07px;">Среднее: 76,85714286</div>
<div class="t" style="left:430.2px;top:629px;font-size:11px;color:#444;letter-spacing:0.18px;">Количество: 7</div>
<div class="t" style="left:520.8px;top:629px;font-size:11px;color:#444;letter-spacing:-0.22px;">Сумма: 538</div>
<div class="t" style="left:854.5px;top:629px;font-size:11px;color:#444;letter-spacing:-0.41px;">100%</div>
<svg style="left:609px;top:631px" width="13" height="13" viewBox="0 0 13 13"><path d="M0.5 0.5H12.5V12.5H0.5Z M0.5 4.5H12.5 M0.5 8.5H12.5 M4.5 0.5V12.5 M8.5 0.5V12.5" fill="none" stroke="#6e6e6e" stroke-width="1"/></svg>
<svg style="left:647px;top:631px" width="14" height="13" viewBox="0 0 14 13"><path d="M0.5 0.5H13.5V12.5H0.5Z" fill="none" stroke="#6e6e6e"/><path d="M3.5 3.5H10.5V9.5H3.5Z M5 5.5H9 M5 7.5H9" fill="none" stroke="#6e6e6e"/></svg>
<svg style="left:685px;top:631px" width="14" height="13" viewBox="0 0 14 13"><path d="M0.5 0.5H13.5V12.5H0.5Z" fill="none" stroke="#6e6e6e"/><path d="M3.5 0.5V6.5H10.5V0.5 M7 0.5V6.5" fill="none" stroke="#6e6e6e"/></svg>
<div class="a" style="left:716px;top:636px;width:6px;height:2px;background:#555;"></div>
<div class="a" style="left:726px;top:637px;width:100px;height:1px;background:#8a8a8a;"></div>
<div class="a" style="left:774px;top:631px;width:4px;height:12px;background:#505050;"></div>
<div class="a" style="left:830px;top:636px;width:8px;height:2px;background:#555;"></div>
<div class="a" style="left:833px;top:633px;width:2px;height:8px;background:#555;"></div>

</body>
</html>
